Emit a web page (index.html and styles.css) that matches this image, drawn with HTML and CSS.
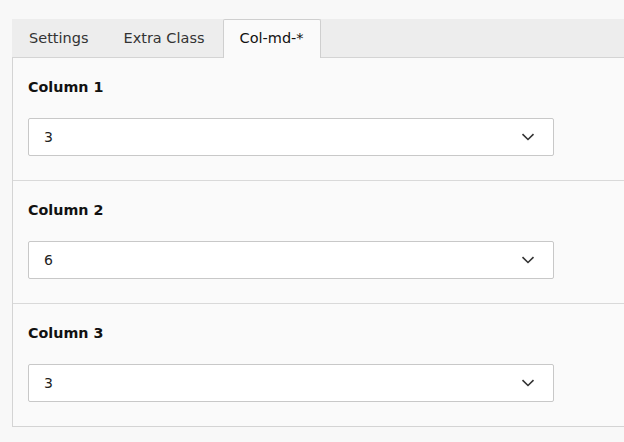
FILE: index.html
```html
<!DOCTYPE html>
<html>
<head>
<meta charset="utf-8">
<link rel="stylesheet" href="styles.css">
</head>
<body>
<div class="wrap">
  <div class="tabs">
    <div class="tab">Settings</div>
    <div class="tab">Extra Class</div>
    <div class="tab active">Col-md-*</div>
  </div>
  <div class="panel">
    <div class="section">
      <div class="label">Column 1</div>
      <div class="select"><span>3</span>
        <svg class="chev" width="14" height="8" viewBox="0 0 14 8"><path d="M1.5 1.2 L7 6.5 L12.5 1.2" fill="none" stroke="#333" stroke-width="1.6"/></svg>
      </div>
    </div>
    <div class="section">
      <div class="label">Column 2</div>
      <div class="select"><span>6</span>
        <svg class="chev" width="14" height="8" viewBox="0 0 14 8"><path d="M1.5 1.2 L7 6.5 L12.5 1.2" fill="none" stroke="#333" stroke-width="1.6"/></svg>
      </div>
    </div>
    <div class="section">
      <div class="label">Column 3</div>
      <div class="select"><span>3</span>
        <svg class="chev" width="14" height="8" viewBox="0 0 14 8"><path d="M1.5 1.2 L7 6.5 L12.5 1.2" fill="none" stroke="#333" stroke-width="1.6"/></svg>
      </div>
    </div>
  </div>
</div>
</body>
</html>
```
FILE: styles.css
```css
html, body {
  margin: 0;
  padding: 0;
  background: #f8f8f8;
}
body {
  font-family: "DejaVu Sans", Verdana, sans-serif;
  color: #111;
}
.wrap {
  padding: 19px 0 0 12px;
  width: 640px;
}
.tabs {
  display: flex;
  height: 38px;
  background: #ededed;
  border-bottom: 1px solid #d4d4d4;
}
.tab {
  box-sizing: border-box;
  height: 39px;
  padding: 0 16px;
  margin-right: 1px;
  border: 1px solid transparent;
  border-bottom: none;
  font-size: 14.5px;
  line-height: 37px;
  color: #333;
}
.tab.active {
  background: #fafafa;
  border-color: #cfcfcf;
  border-radius: 2px 2px 0 0;
  color: #111;
}
.panel {
  background: #fafafa;
  border-left: 1px solid #d4d4d4;
  border-bottom: 1px solid #d4d4d4;
}
.section {
  padding: 20px 0 24px 15px;
  border-bottom: 1px solid #d9d9d9;
}
.section:last-child {
  border-bottom: none;
}
.label {
  font-weight: bold;
  font-size: 14.3px;
  line-height: 18px;
  margin-bottom: 22px;
}
.select {
  box-sizing: border-box;
  width: 526px;
  height: 38px;
  background: #fff;
  border: 1px solid #c8c8c8;
  border-radius: 2px;
  display: flex;
  align-items: center;
  justify-content: space-between;
  padding: 0 18px 0 15px;
  font-size: 14px;
  color: #222;
}
.chev {
  display: block;
}
```
